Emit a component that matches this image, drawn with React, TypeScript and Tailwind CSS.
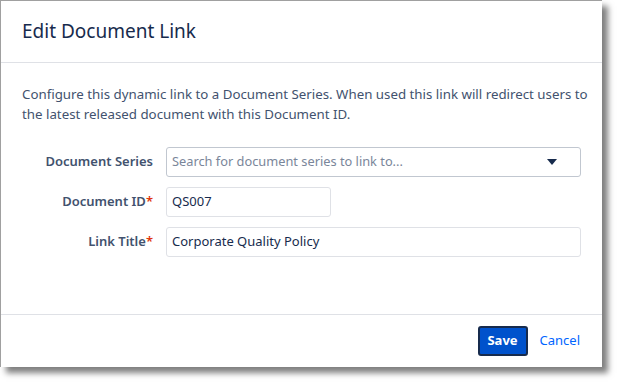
import React from "react";

const font = { fontFamily: '"Noto Sans", "Open Sans", sans-serif' };

export default function App() {
  return (
    <div className="w-[618px] h-[383px] bg-white" style={font}>
      <div className="w-[602px] h-[367px] bg-white border-l border-t border-[#a0a0a0] shadow-[6px_6px_6px_rgba(0,0,0,0.5)] flex flex-col">
        <div className="h-[62px] px-[21px] flex items-center border-b border-[#dfe1e6] shrink-0">
          <h1 className="text-[19px] text-[#172b4d] leading-none">Edit Document Link</h1>
        </div>
        <div className="flex-1 px-[21px] pt-[21px]">
          <p className="w-[575px] text-[13.3px] leading-[20px] text-[#42526e]">
            Configure this dynamic link to a Document Series. When used this link will redirect users to the latest released document with this Document ID.
          </p>
          <div className="mt-[23px] flex flex-col gap-[10px]">
            <div className="flex items-center">
              <label className="w-[131px] text-right text-[13px] font-semibold text-[#42526e]">Document Series</label>
              <div className="ml-[13px] w-[415px] h-[30px] border border-[#c1c7d0] rounded-[3px] flex items-center justify-between px-[5px]">
                <span className="text-[12.8px] text-[#7a869a]">Search for document series to link to...</span>
                <svg width="10" height="6" viewBox="0 0 10 6" className="mr-[18px]"><path d="M0 0h10L5 6z" fill="#172b4d" /></svg>
              </div>
            </div>
            <div className="flex items-center">
              <label className="w-[131px] text-right text-[13px] font-semibold text-[#42526e]">
                Document ID<span className="text-[#de350b]">*</span>
              </label>
              <div className="ml-[13px] w-[165px] h-[30px] border border-[#dfe1e6] rounded-[3px] flex items-center px-[5px]">
                <span className="text-[13px] text-[#172b4d]">QS007</span>
              </div>
            </div>
            <div className="flex items-center">
              <label className="w-[131px] text-right text-[13px] font-semibold text-[#42526e]">
                Link Title<span className="text-[#de350b]">*</span>
              </label>
              <div className="ml-[13px] w-[415px] h-[30px] border border-[#dfe1e6] rounded-[3px] flex items-center px-[5px]">
                <span className="text-[13px] text-[#172b4d]">Corporate Quality Policy</span>
              </div>
            </div>
          </div>
        </div>
        <div className="h-[53px] border-t border-[#dfe1e6] flex items-center justify-end pr-[22px] shrink-0">
          <button className="w-[50px] h-[30px] bg-[#0052cc] border-2 border-[#172b4d] rounded-[3px] text-white text-[13px] font-bold flex items-center justify-center">
            Save
          </button>
          <span className="ml-[12px] text-[13px] text-[#0065ff]">Cancel</span>
        </div>
      </div>
    </div>
  );
}
